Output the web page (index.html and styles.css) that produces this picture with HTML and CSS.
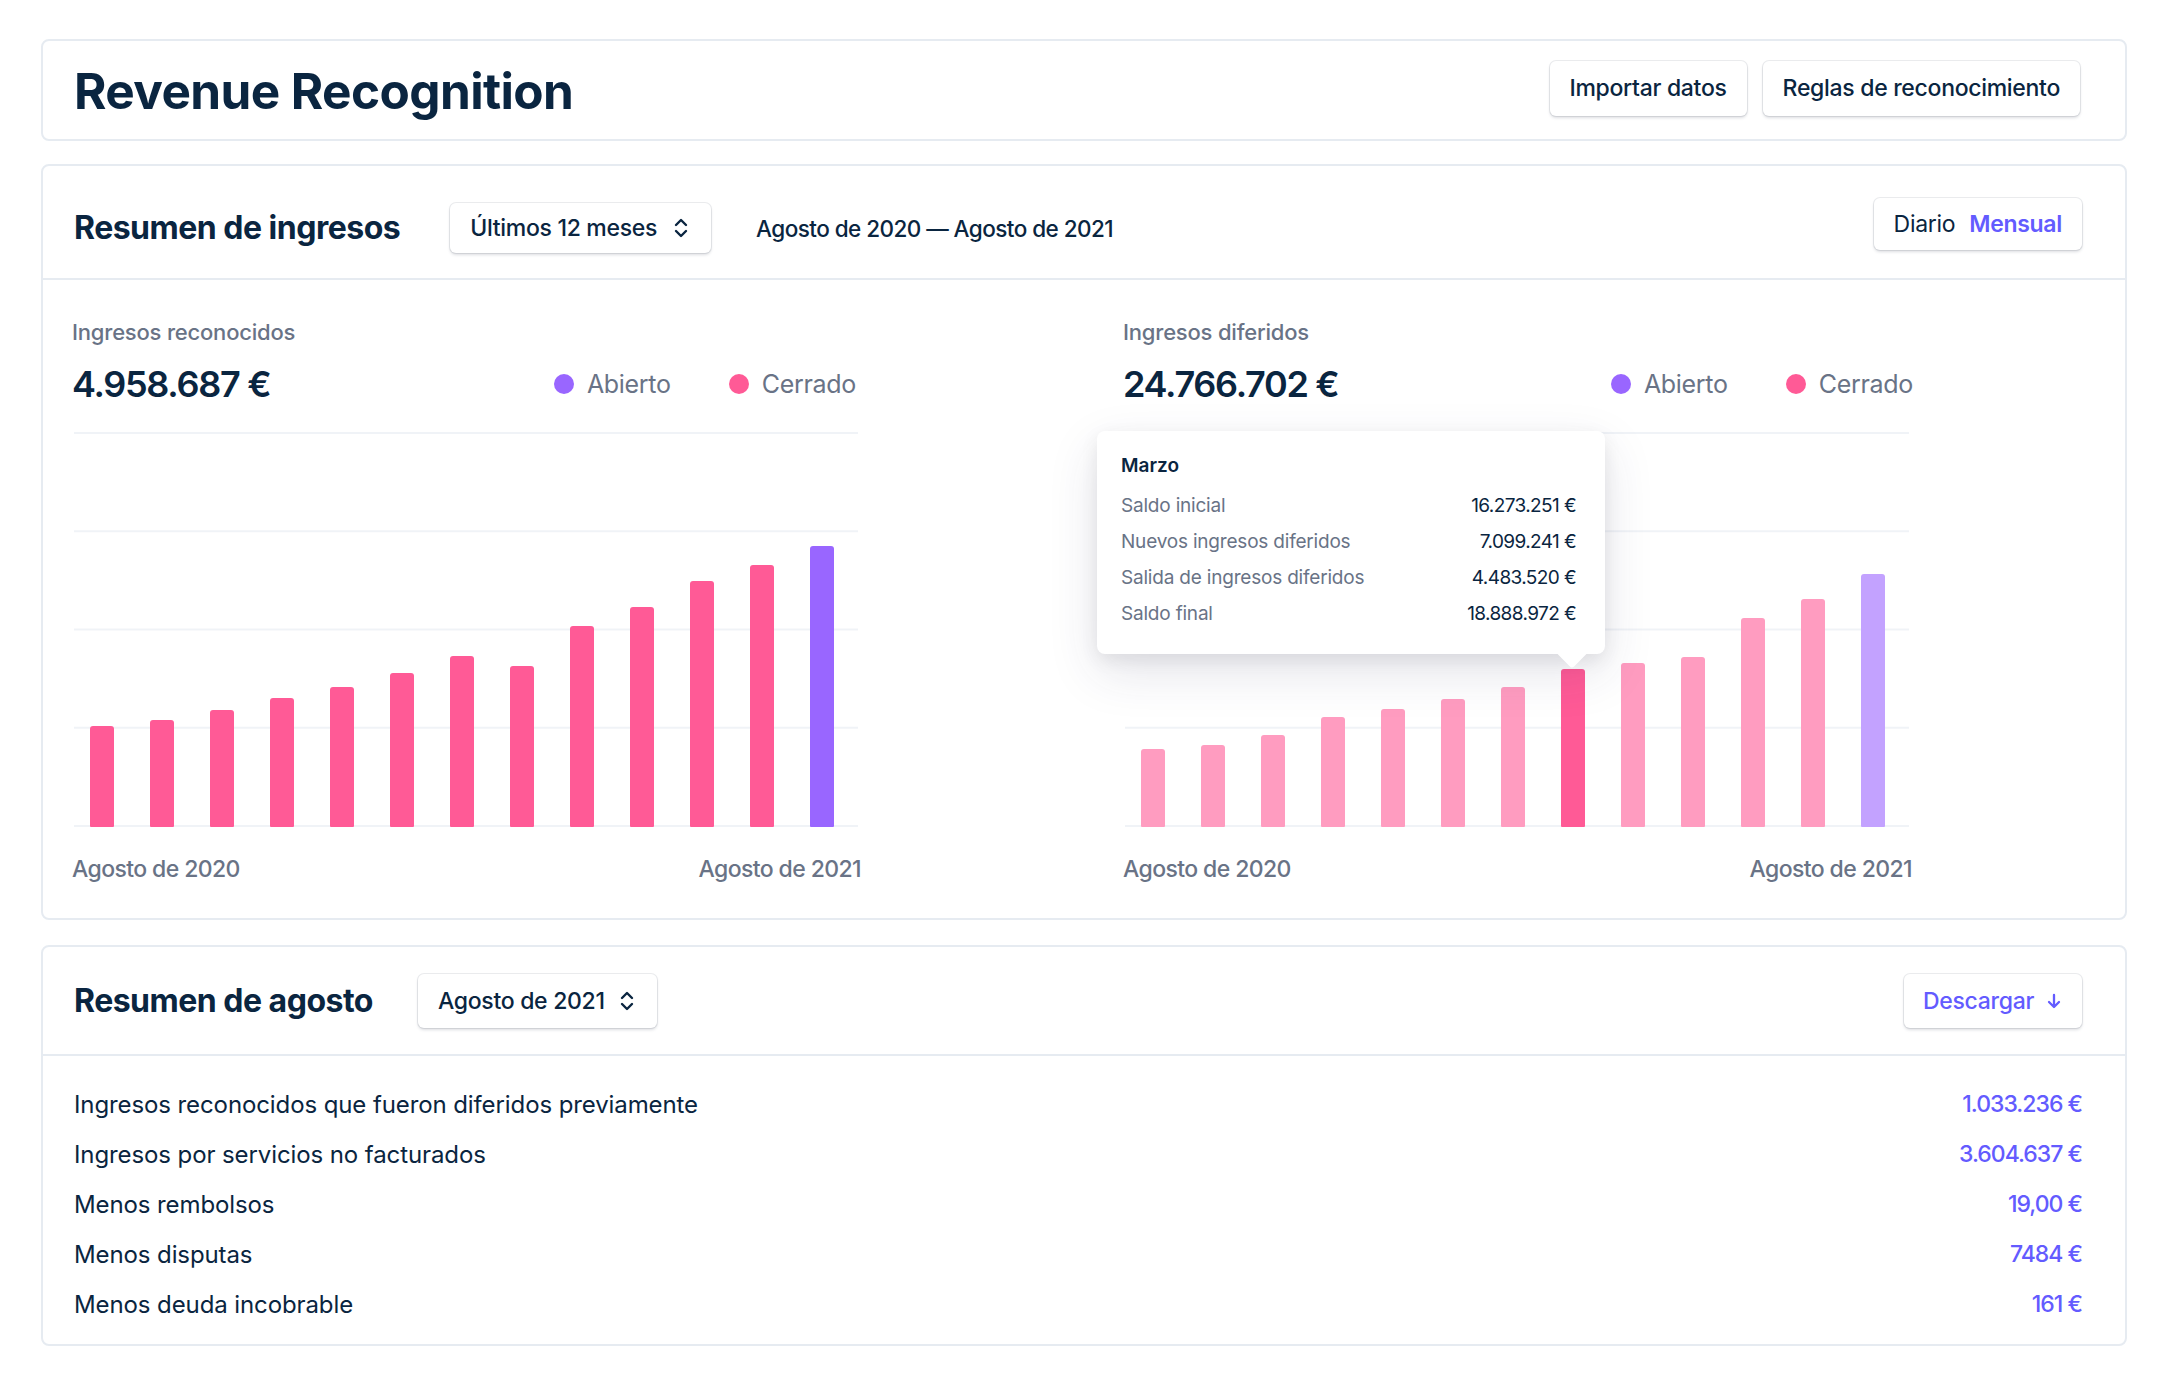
FILE: index.html
```html
<!DOCTYPE html>
<html lang="es">
<head>
<meta charset="utf-8">
<title>Revenue Recognition</title>
<link rel="stylesheet" href="styles.css">
</head>
<body>
<div class="page">
  <header class="card top-card">
    <h1 class="page-title">Revenue Recognition</h1>
    <div class="actions">
      <button class="btn">Importar datos</button>
      <button class="btn">Reglas de reconocimiento</button>
    </div>
  </header>

  <section class="card">
    <div class="card-head head-ingresos">
      <h2 class="section-title">Resumen de ingresos</h2>
      <button class="btn select">Últimos 12 meses
        <svg class="chev" viewBox="0 0 16 22" width="16" height="22"><path d="M3 8 L8 3 L13 8 M3 14 L8 19 L13 14" fill="none" stroke="#0a2540" stroke-width="2.4" stroke-linecap="round" stroke-linejoin="round"/></svg>
      </button>
      <span class="range">Agosto de 2020 — Agosto de 2021</span>
      <div class="btn toggle"><span class="opt">Diario</span><span class="opt active">Mensual</span></div>
    </div>
    <div class="charts">
      <div class="chart">
        <div class="metric-label">Ingresos reconocidos</div>
        <div class="metric-row">
          <span class="metric-value">4.958.687 €</span>
          <div class="legend">
            <span class="legend-item"><i class="dot dot-open"></i>Abierto</span>
            <span class="legend-item"><i class="dot dot-closed"></i>Cerrado</span>
          </div>
        </div>
        <div class="plot">
          <div class="bar pink" style="height:101px"></div>
          <div class="bar pink" style="height:107px"></div>
          <div class="bar pink" style="height:117px"></div>
          <div class="bar pink" style="height:129px"></div>
          <div class="bar pink" style="height:140px"></div>
          <div class="bar pink" style="height:154px"></div>
          <div class="bar pink" style="height:171px"></div>
          <div class="bar pink" style="height:161px"></div>
          <div class="bar pink" style="height:201px"></div>
          <div class="bar pink" style="height:220px"></div>
          <div class="bar pink" style="height:246px"></div>
          <div class="bar pink" style="height:262px"></div>
          <div class="bar purple" style="height:281px"></div>
        </div>
        <div class="axis"><span>Agosto de 2020</span><span>Agosto de 2021</span></div>
      </div>

      <div class="chart chart-deferred">
        <div class="metric-label">Ingresos diferidos</div>
        <div class="metric-row">
          <span class="metric-value">24.766.702 €</span>
          <div class="legend">
            <span class="legend-item"><i class="dot dot-open"></i>Abierto</span>
            <span class="legend-item"><i class="dot dot-closed"></i>Cerrado</span>
          </div>
        </div>
        <div class="plot">
          <div class="bar light-pink" style="height:78px"></div>
          <div class="bar light-pink" style="height:82px"></div>
          <div class="bar light-pink" style="height:92px"></div>
          <div class="bar light-pink" style="height:110px"></div>
          <div class="bar light-pink" style="height:118px"></div>
          <div class="bar light-pink" style="height:128px"></div>
          <div class="bar light-pink" style="height:140px"></div>
          <div class="bar hot-pink" style="height:158px"></div>
          <div class="bar light-pink" style="height:164px"></div>
          <div class="bar light-pink" style="height:170px"></div>
          <div class="bar light-pink" style="height:209px"></div>
          <div class="bar light-pink" style="height:228px"></div>
          <div class="bar light-purple" style="height:253px"></div>
        </div>
        <div class="axis"><span>Agosto de 2020</span><span>Agosto de 2021</span></div>

        <div class="tooltip">
          <div class="tip-title">Marzo</div>
          <div class="tip-row"><span class="tip-label">Saldo inicial</span><span class="tip-val">16.273.251 €</span></div>
          <div class="tip-row"><span class="tip-label">Nuevos ingresos diferidos</span><span class="tip-val">7.099.241 €</span></div>
          <div class="tip-row"><span class="tip-label">Salida de ingresos diferidos</span><span class="tip-val">4.483.520 €</span></div>
          <div class="tip-row"><span class="tip-label">Saldo final</span><span class="tip-val">18.888.972 €</span></div>
        </div>
      </div>
    </div>
  </section>

  <section class="card">
    <div class="card-head head-agosto">
      <h2 class="section-title">Resumen de agosto</h2>
      <button class="btn select select-month">Agosto de 2021
        <svg class="chev" viewBox="0 0 16 22" width="16" height="22"><path d="M3 8 L8 3 L13 8 M3 14 L8 19 L13 14" fill="none" stroke="#0a2540" stroke-width="2.4" stroke-linecap="round" stroke-linejoin="round"/></svg>
      </button>
      <button class="btn download">Descargar
        <svg class="arrow" viewBox="0 0 16 16" width="16" height="16"><path d="M8 2 V14 M3 9 L8 14 L13 9" fill="none" stroke="#635bff" stroke-width="2.3" stroke-linecap="round" stroke-linejoin="round"/></svg>
      </button>
    </div>
    <div class="summary">
      <div class="sum-row"><span>Ingresos reconocidos que fueron diferidos previamente</span><span class="sum-val">1.033.236 €</span></div>
      <div class="sum-row"><span>Ingresos por servicios no facturados</span><span class="sum-val">3.604.637 €</span></div>
      <div class="sum-row"><span>Menos rembolsos</span><span class="sum-val">19,00 €</span></div>
      <div class="sum-row"><span>Menos disputas</span><span class="sum-val">7484 €</span></div>
      <div class="sum-row"><span>Menos deuda incobrable</span><span class="sum-val">161 €</span></div>
    </div>
  </section>
</div>
</body>
</html>
```

FILE: styles.css
```css
* { box-sizing: border-box; }

html, body {
  margin: 0;
  background: #ffffff;
}

body {
  font-family: Inter, "Noto Sans", "Liberation Sans", sans-serif;
  color: #0a2540;
}

.page {
  padding: 39px 33px 0 41px;
}

.card {
  background: #fff;
  border: 2px solid #e6ebf1;
  border-radius: 8px;
  margin-bottom: 23px;
}

.card + .card + .card {
  margin-top: 25px;
}

/* Top header card */
.top-card {
  height: 102px;
  display: flex;
  align-items: center;
  justify-content: space-between;
  padding: 0 45px 0 31px;
}

.page-title {
  margin: 4px 0 0;
  font-size: 49.5px;
  font-weight: 700;
  letter-spacing: -0.6px;
  line-height: 1;
}

.actions {
  display: flex;
  gap: 16px;
  margin-top: -4px;
}

.btn {
  font-family: inherit;
  background: #fff;
  border: none;
  border-radius: 6px;
  box-shadow: 0 0 0 1px rgba(60, 66, 87, 0.10), 0 2px 3px rgba(60, 66, 87, 0.18);
  color: #0a2540;
  font-size: 23px;
  font-weight: 500;
  letter-spacing: -0.3px;
  height: 55px;
  padding: 0 20px;
  display: inline-flex;
  align-items: center;
}

/* Card header */
.card-head {
  display: flex;
  align-items: center;
  border-bottom: 2px solid #e6ebf1;
  padding: 0 43px 0 31px;
}

.head-ingresos {
  height: 114px;
  padding-top: 12px;
}

.head-agosto {
  height: 109px;
}

.section-title {
  margin: 0;
  font-size: 32px;
  font-weight: 700;
  letter-spacing: -0.5px;
  line-height: 1;
}

.select {
  height: 50px;
  margin-left: 50px;
  padding: 0 22px 0 20px;
  gap: 16px;
}

.select-month {
  height: 54px;
  margin-left: 45px;
  gap: 14px;
}

.chev { display: block; }

.range {
  margin-left: 45px;
  font-size: 22.5px;
  font-weight: 500;
  letter-spacing: -0.55px;
}

.toggle {
  margin-left: auto;
  height: 52px;
  margin-bottom: 8px;
  padding: 0 20px;
  gap: 14px;
  font-size: 23px;
}

.opt { font-weight: 400; }
.opt.active { color: #635bff; font-weight: 600; }

/* Charts */
.charts {
  display: grid;
  grid-template-columns: 1051px 1fr;
  padding: 38px 0 34px 29px;
}

.chart {
  position: relative;
  width: 790px;
}

.metric-label {
  font-size: 22px;
  line-height: 28px;
  color: #697386;
  font-weight: 500;
  letter-spacing: -0.2px;
}

.metric-row {
  margin-top: 16px;
  height: 44px;
  display: flex;
  align-items: center;
  justify-content: space-between;
  width: 784px;
}

.chart-deferred .metric-row {
  width: 790px;
}

.metric-value {
  font-size: 36px;
  font-weight: 600;
  letter-spacing: -1.3px;
}

.legend {
  display: flex;
  gap: 58px;
}

.legend-item {
  display: inline-flex;
  align-items: center;
  gap: 13px;
  font-size: 25px;
  color: #697386;
  letter-spacing: -0.3px;
}

.dot {
  width: 20px;
  height: 20px;
  border-radius: 50%;
  display: inline-block;
}

.dot-open { background: #9966ff; }
.dot-closed { background: #ff5a96; }

.plot {
  margin-top: 26px;
  margin-left: 2px;
  width: 784px;
  height: 395px;
  display: flex;
  align-items: flex-end;
  gap: 36px;
  padding-left: 16px;
  background-image: linear-gradient(#f0f3f7 2px, transparent 2px);
  background-size: 100% 98.25px;
  background-repeat: repeat-y;
}

.bar {
  width: 24px;
  border-radius: 3px 3px 1px 1px;
}

.pink { background: #ff5a96; }
.purple { background: #9966ff; }
.light-pink { background: #ff9cc0; }
.hot-pink { background: #ff5a96; }
.light-purple { background: #c3a2ff; }

.axis {
  margin-top: 27px;
  display: flex;
  justify-content: space-between;
  font-size: 23px;
  line-height: 30px;
  color: #697386;
  font-weight: 500;
  letter-spacing: -0.6px;
  width: 789px;
}

/* Tooltip */
.tooltip {
  position: absolute;
  left: -26px;
  top: 113px;
  width: 508px;
  height: 223px;
  background: #fff;
  border-radius: 8px;
  padding: 23px 29px 0 24px;
  box-shadow: 0 18px 50px rgba(50, 50, 93, 0.13), 0 6px 18px rgba(0, 0, 0, 0.08);
}

.tooltip::after {
  content: "";
  position: absolute;
  left: 464px;
  bottom: -10px;
  width: 22px;
  height: 22px;
  background: #fff;
  transform: rotate(45deg);
  border-radius: 3px;
}

.tip-title {
  font-size: 19px;
  line-height: 24px;
  font-weight: 600;
  margin-bottom: 9px;
}

.tip-row {
  display: flex;
  justify-content: space-between;
  align-items: center;
  height: 36px;
  font-size: 19px;
  letter-spacing: -0.2px;
}

.tip-label { color: #697386; }
.tip-val { color: #0a2540; letter-spacing: -0.6px; }

/* Summary */
.download {
  margin-left: auto;
  height: 54px;
  color: #635bff;
  font-weight: 500;
  gap: 12px;
  padding: 0 20px 0 19px;
}

.summary {
  padding: 23px 43px 15px 31px;
}

.sum-row {
  height: 50px;
  display: flex;
  align-items: center;
  justify-content: space-between;
  font-size: 24px;
  letter-spacing: -0.1px;
}

.sum-val {
  color: #635bff;
  font-weight: 500;
  font-size: 23px;
  letter-spacing: -1px;
}
```
